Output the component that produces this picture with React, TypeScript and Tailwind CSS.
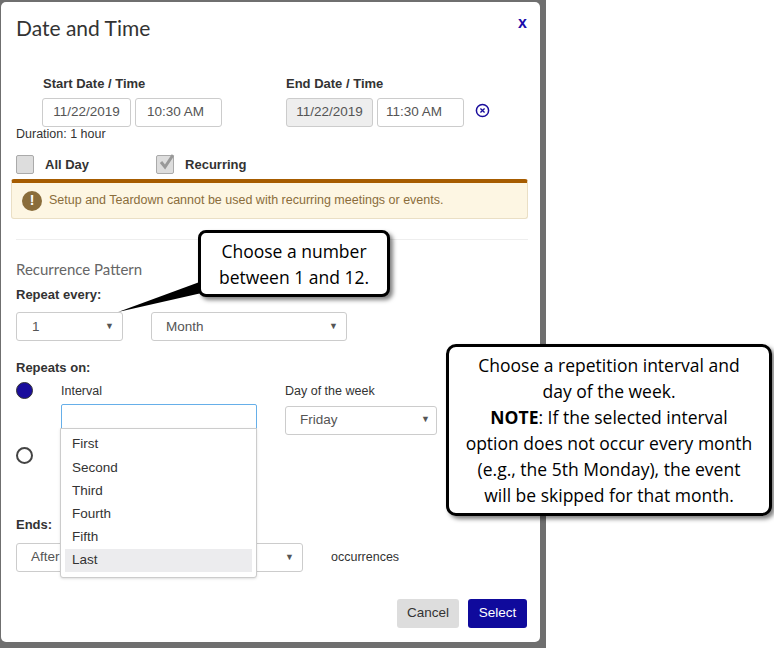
import React from "react";

const inp = "h-[29px] border border-[#ccc] rounded-[3px] flex items-center text-[13.5px] text-[#555]";
const Caret = () => <span className="text-[9px] text-[#555]">▼</span>;

export default function App() {
  return (
    <div className="w-[774px] h-[648px] bg-white relative overflow-hidden" style={{ fontFamily: '"Liberation Sans", Arial, sans-serif' }}>
      <div className="w-[546px] h-[648px] bg-[#6f6f6f] pt-[2px] pl-[1px]">
        <div className="w-[539px] h-[640px] bg-white rounded-[5px] relative px-[15px]">
          <div className="flex justify-between items-start pt-[10px]">
            <div className="text-[21px] text-[#333]" style={{ fontFamily: 'Lato, sans-serif' }}>Date and Time</div>
            <div className="text-[16px] font-bold text-[#1a0dab] mt-[-1px] mr-[-2px]">x</div>
          </div>
          <div className="flex mt-[30px]">
            <div className="ml-[27px] w-[243px]">
              <div className="text-[13px] font-bold text-[#333] mb-[5px]">Start Date / Time</div>
              <div className="flex gap-[4px] ml-[-1px]">
                <div className={inp + " w-[89px] justify-center"}>11/22/2019</div>
                <div className={inp + " w-[87px] pl-[11px]"}>10:30 AM</div>
              </div>
            </div>
            <div>
              <div className="text-[13px] font-bold text-[#333] mb-[5px]">End Date / Time</div>
              <div className="flex gap-[4px] items-center">
                <div className={inp + " w-[87px] justify-center bg-[#eee]"}>11/22/2019</div>
                <div className={inp + " w-[87px] pl-[8px]"}>11:30 AM</div>
                <svg width="15" height="15" viewBox="0 0 16 16" className="ml-[7px] mt-[-4px]"><circle cx="8" cy="8" r="6.5" fill="none" stroke="#1a0d9c" strokeWidth="1.6"/><path d="M5.8 5.8l4.4 4.4M10.2 5.8l-4.4 4.4" stroke="#1a0d9c" strokeWidth="1.4"/></svg>
              </div>
            </div>
          </div>
          <div className="text-[12.5px] text-[#333] mt-[-2px]">Duration: 1 hour</div>
          <div className="flex items-center mt-[11px] text-[13px] font-bold text-[#333]">
            <div className="w-[18px] h-[19px] border border-[#aaa] bg-[#ddd] rounded-[2px]" />
            <span className="ml-[11px]">All Day</span>
            <div className="ml-[67px] w-[18px] h-[19px] border border-[#aaa] bg-[#ddd] rounded-[2px] relative">
              <svg className="absolute left-[1px] top-[-3px]" width="18" height="19" viewBox="0 0 18 19"><path d="M3 9l4 5 8-12" fill="none" stroke="#999" strokeWidth="3"/></svg>
            </div>
            <span className="ml-[11px]">Recurring</span>
          </div>
          <div className="mt-[5px] ml-[-5px] w-[517px] h-[40px] bg-[#fdf6e3] border-t-[4px] border-t-[#a65c00] border-x border-b border-[#eadfc5] rounded-[3px] flex items-center px-[10px]">
            <div className="w-[20px] h-[20px] rounded-full bg-[#8a6d3b] text-white text-[14px] font-bold flex items-center justify-center">!</div>
            <span className="ml-[7px] text-[12.5px] text-[#8a6d3b]">Setup and Teardown cannot be used with recurring meetings or events.</span>
          </div>
          <div className="mt-[20px] border-t border-[#eee] w-[512px]" />
          <div className="mt-[18px] text-[15px] text-[#666]" style={{ fontFamily: 'Lato, sans-serif' }}>Recurrence Pattern</div>
          <div className="mt-[4px] text-[13px] font-bold text-[#333]">Repeat every:</div>
          <div className="flex mt-[8px]">
            <div className={inp + " w-[107px] justify-between px-[15px] pr-[8px] text-[#333]"}><span>1</span><Caret /></div>
            <div className={inp + " w-[196px] ml-[28px] justify-between pl-[14px] pr-[8px] text-[#333]"}><span>Month</span><Caret /></div>
          </div>
          <div className="mt-[17px] text-[13px] font-bold text-[#333]">Repeats on:</div>
          <div className="flex mt-[4px] relative">
            <div className="w-[17px] h-[17px] rounded-full bg-[#1a0d9c] border border-[#333]" />
            <div className="ml-[28px]">
              <div className="text-[12.5px] text-[#333]">Interval</div>
              <div className="mt-[3px] w-[196px] h-[28px] border border-[#66afe9] rounded-[2px]" />
            </div>
            <div className="ml-[28px]">
              <div className="text-[12.5px] text-[#333]">Day of the week</div>
              <div className={inp + " mt-[5px] w-[152px] justify-between pl-[14px] pr-[6px] text-[#333]"}><span>Friday</span><Caret /></div>
            </div>
          </div>
          <div className="mt-[12px] w-[17px] h-[17px] rounded-full border-2 border-[#444]" />
          <div className="mt-[51px] text-[13px] font-bold text-[#333]">Ends:</div>
          <div className="flex items-center mt-[9px]">
            <div className={inp + " w-[287px] justify-between pl-[14px] pr-[8px] text-[#333]"}><span>After</span><Caret /></div>
            <span className="ml-[28px] text-[12.5px] text-[#333]">occurrences</span>
          </div>
          <div className="flex justify-end gap-[9px] mt-[27px] mr-[-2px]">
            <div className="w-[62px] h-[29px] bg-[#ddd] rounded-[3px] flex items-center justify-center text-[13.5px] text-[#333]">Cancel</div>
            <div className="w-[59px] h-[29px] bg-[#0f0a9c] rounded-[3px] flex items-center justify-center text-[13.5px] text-white">Select</div>
          </div>
          <div className="absolute left-[59px] top-[426px] w-[197px] h-[150px] bg-white border border-[#ccc] rounded-b-[3px] shadow-sm pt-[4px] text-[13.5px] text-[#333]">
            {["First", "Second", "Third", "Fourth", "Fifth"].map(t => (
              <div key={t} className="h-[23.2px] flex items-center pl-[11px]">{t}</div>
            ))}
            <div className="h-[23px] mx-[4px] flex items-center pl-[7px] bg-[#ececee]">Last</div>
          </div>
        </div>
      </div>
      <svg className="absolute left-0 top-0 pointer-events-none" width="774" height="648">
        <path d="M205 280 L118 312 L215 290 Z" fill="#000" />
      </svg>
      <div className="absolute left-[198px] top-[230px] w-[192px] h-[67px] bg-white border-[3px] border-black rounded-[8px] shadow-[3px_3px_4px_rgba(0,0,0,0.5)] flex items-center justify-center text-center text-[17.5px] leading-[26px] text-black" style={{ fontFamily: '"Open Sans", sans-serif' }}>
        Choose a number<br />between 1 and 12.
      </div>
      <div className="absolute left-[446px] top-[344px] w-[326px] h-[172px] bg-white border-[3px] border-black rounded-[10px] shadow-[3px_3px_4px_rgba(0,0,0,0.5)] flex items-center justify-center text-center text-[17.5px] leading-[26px] text-black" style={{ fontFamily: '"Open Sans", sans-serif' }}>
        <div>Choose a repetition interval and<br />day of the week.<br /><b>NOTE</b>: If the selected interval<br />option does not occur every month<br />(e.g., the 5th Monday), the event<br />will be skipped for that month.</div>
      </div>
    </div>
  );
}
